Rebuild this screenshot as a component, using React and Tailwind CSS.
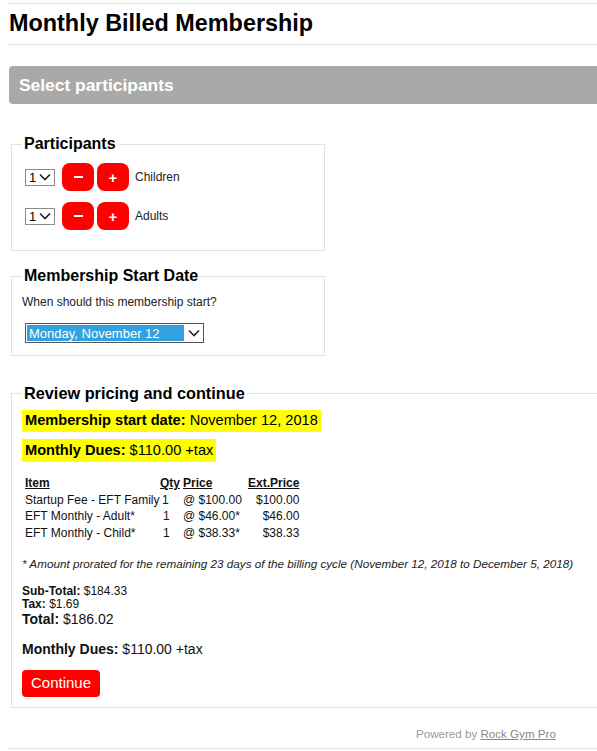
import React from "react";

function Chevron({ className = "" }) {
  return (
    <svg width="12" height="8" viewBox="0 0 12 8" className={className}>
      <polyline points="1,1.5 6,6.5 11,1.5" fill="none" stroke="#222" strokeWidth="1.6" />
    </svg>
  );
}

function SmallSelect() {
  return (
    <div className="ml-[3px] flex h-[17px] w-[30px] items-center border border-[#8a8a8a] bg-white pl-[3px] text-[13px] leading-none text-black">
      <span>1</span>
      <Chevron className="ml-[3px]" />
    </div>
  );
}

function RoundBtn({ children }) {
  return (
    <div className="flex h-[28px] w-[32px] items-center justify-center rounded-[8px] bg-[#ff0000] text-white">
      {children}
    </div>
  );
}

function ParticipantRow({ label }) {
  return (
    <div className="flex items-center">
      <SmallSelect />
      <div className="ml-[7px] flex gap-[3px]">
        <RoundBtn>
          <div className="h-[2px] w-[9px] bg-white" />
        </RoundBtn>
        <RoundBtn>
          <span className="text-[15px] font-bold leading-none">+</span>
        </RoundBtn>
      </div>
      <span className="ml-[6px] text-[12px] text-[#222]">{label}</span>
    </div>
  );
}

export default function App() {
  return (
    <div
      className="h-[751px] w-[597px] overflow-hidden bg-white text-black"
      style={{ fontFamily: '"Liberation Sans", Arial, sans-serif' }}
    >
      <div className="ml-[8px] w-[620px] pt-[3px]">
        <div className="border-t border-[#e3e3e3]" />
        <div className="flex h-[41px] items-center border-b border-[#e3e3e3] pl-[1px]">
          <h1 className="text-[23.4px] font-bold leading-none">Monthly Billed Membership</h1>
        </div>
        <div className="ml-[1px] mt-[21px] flex h-[38px] items-center rounded-[4px] bg-[#a9a9a9] pl-[10px]">
          <span className="text-[17.4px] font-bold text-white">Select participants</span>
        </div>

        <fieldset className="ml-[3px] mt-[30px] w-[314px] border border-[#e2e2e2] px-[10px] pb-[20px] pt-[9px]">
          <legend className="px-[2px] text-[16px] font-bold leading-[20px]">Participants</legend>
          <div className="flex flex-col gap-[11px]">
            <ParticipantRow label="Children" />
            <ParticipantRow label="Adults" />
          </div>
        </fieldset>

        <fieldset className="ml-[3px] mt-[15px] w-[314px] border border-[#e2e2e2] px-[10px] pb-[12px] pt-[8px]">
          <legend className="px-[2px] text-[16px] font-bold leading-[20px]">Membership Start Date</legend>
          <div className="text-[12px] leading-[16px] text-[#222]">When should this membership start?</div>
          <div className="ml-[3px] mt-[13px] flex h-[20px] w-[179px] items-center border border-[#555] bg-white p-[1px]">
            <div className="flex h-full w-[157px] items-center bg-[#33a0e0] pl-[2px] text-[13px] leading-none text-white">
              Monday, November 12
            </div>
            <Chevron className="ml-[4px]" />
          </div>
        </fieldset>

        <fieldset className="ml-[3px] mt-[27px] border border-[#e2e2e2] px-[10px] pb-[10px] pt-[7px]">
          <legend className="px-[2px] text-[16.3px] font-bold leading-[20px]">Review pricing and continue</legend>
          <div className="flex flex-col items-start gap-[7px]">
            <div className="flex h-[22px] items-center bg-[#ffff00] px-[3px] text-[14.6px]">
              <b>Membership start date:</b>&nbsp;November 12, 2018
            </div>
            <div className="flex h-[23px] items-center bg-[#ffff00] px-[3px] text-[14.6px]">
              <b>Monthly Dues:</b>&nbsp;$110.00 +tax
            </div>
          </div>

          <table className="ml-[3px] mt-[13px] border-collapse text-[12px] leading-[16.5px] text-[#111]">
            <thead>
              <tr className="font-bold">
                <td className="w-[135px] p-0"><u>Item</u></td>
                <td className="w-[23px] p-0"><u>Qty</u></td>
                <td className="w-[65px] p-0"><u>Price</u></td>
                <td className="w-[49px] p-0 text-right"><u>Ext.Price</u></td>
              </tr>
            </thead>
            <tbody>
              <tr>
                <td className="p-0">Startup Fee - EFT Family</td>
                <td className="p-0 pl-[2px]">1</td>
                <td className="p-0">@ $100.00</td>
                <td className="p-0 text-right">$100.00</td>
              </tr>
              <tr>
                <td className="p-0">EFT Monthly - Adult*</td>
                <td className="p-0 pl-[3px]">1</td>
                <td className="p-0">@ $46.00*</td>
                <td className="p-0 text-right">$46.00</td>
              </tr>
              <tr>
                <td className="p-0">EFT Monthly - Child*</td>
                <td className="p-0 pl-[3px]">1</td>
                <td className="p-0">@ $38.33*</td>
                <td className="p-0 text-right">$38.33</td>
              </tr>
            </tbody>
          </table>

          <div className="mt-[15px] text-[11.7px] italic leading-[16px] text-[#222]">
            * Amount prorated for the remaining 23 days of the billing cycle (November 12, 2018 to December 5, 2018)
          </div>

          <div className="mt-[13px] text-[#111]">
            <div className="text-[12px] leading-[13px]"><b>Sub-Total:</b> $184.33</div>
            <div className="text-[12px] leading-[13px]"><b>Tax:</b> $1.69</div>
            <div className="text-[14px] leading-[16px]"><b>Total:</b> $186.02</div>
          </div>

          <div className="mt-[13px] text-[14px] leading-[18px] text-[#111]">
            <b>Monthly Dues:</b> $110.00 +tax
          </div>

          <div className="mt-[12px] flex h-[27px] w-[78px] items-center justify-center rounded-[4px] bg-[#ff0000] text-[15px] text-white">
            Continue
          </div>
        </fieldset>

        <div className="flex h-[41px] items-start border-b border-[#e3e3e3] pl-[408px] pt-[18px] text-[11.6px] leading-[16px] text-[#999]">
          Powered by&nbsp;<span className="text-[#888] underline">Rock Gym Pro</span>
        </div>
      </div>
    </div>
  );
}
